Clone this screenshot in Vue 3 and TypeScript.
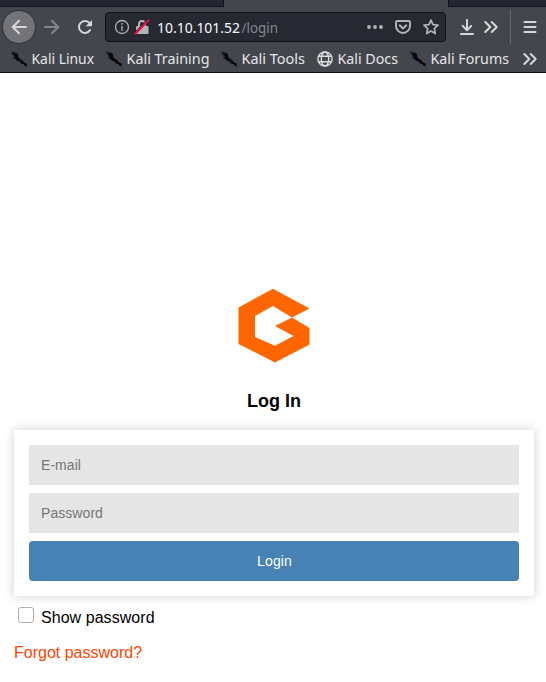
<script setup lang="ts">
import { computed, ref } from 'vue'

interface Bookmark {
  label: string
  icon: 'dragon' | 'globe'
  width: number
  textWidth: number
}

const bookmarks: Bookmark[] = [
  { label: 'Kali Linux', icon: 'dragon', width: 95, textWidth: 62.5 },
  { label: 'Kali Training', icon: 'dragon', width: 115, textWidth: 83 },
  { label: 'Kali Tools', icon: 'dragon', width: 96, textWidth: 63.5 },
  { label: 'Kali Docs', icon: 'globe', width: 93, textWidth: 60.5 },
  { label: 'Kali Forums', icon: 'dragon', width: 112, textWidth: 78.5 },
]

const email = ref('')
const password = ref('')
const showPassword = ref(false)
const passwordType = computed(() => (showPassword.value ? 'text' : 'password'))
</script>

<template>
  <div class="window">
    <header class="browser">
      <div class="tabs"><div class="tab"></div><div class="active-tab"></div><div class="tab rest"></div></div>
      <nav class="toolbar">
        <button class="back" aria-label="Back">
          <svg width="16" height="16" viewBox="0 0 16 16" class="stroke"><path d="M15 8H2M8 1.7 1.7 8 8 14.3" /></svg>
        </button>
        <svg class="forward stroke" width="16" height="16" viewBox="0 0 16 16"><path d="M1 8h13M8 1.7 14.3 8 8 14.3" /></svg>
        <svg class="reload" width="16" height="16" viewBox="0 0 16 16">
          <path class="arc" d="M12.2 3.7A6 6 0 1 0 13.1 11" />
          <path class="solid" d="M15 1v6.3H8.7Z" />
        </svg>
        <div class="address">
          <svg class="info" width="16" height="16" viewBox="0 0 16 16">
            <circle cx="8" cy="8" r="6.5" /><path d="M8 7v4.7M8 4.1v1.6" />
          </svg>
          <svg class="lock" width="16" height="16" viewBox="0 0 16 16">
            <path d="M5 7.5V4.9a3 3 0 0 1 6 0v2.6" class="shackle" />
            <rect x="2" y="7" width="12.5" height="8" rx="1.2" />
            <path d="M.2 14.3 13.4.6" class="gap" />
            <path d="M1.5 14.8 14.5 1.4" class="slash" />
          </svg>
          <div class="url">
            <svg width="84" height="24"><text x="0" y="17.5" textLength="83" lengthAdjust="spacingAndGlyphs" class="host">10.10.101.52</text></svg>
            <svg width="40" height="24"><text x="0.5" y="17.5" textLength="36.5" lengthAdjust="spacingAndGlyphs" class="path">/login</text></svg>
          </div>
          <div class="actions">
            <svg width="16" height="16" viewBox="0 0 16 16" fill="#b2b4b8"><circle cx="2" cy="8" r="1.9" /><circle cx="8" cy="8" r="1.9" /><circle cx="14" cy="8" r="1.9" /></svg>
            <svg class="action-line" width="16" height="16" viewBox="0 0 16 16"><path d="M2.2 2h11.6q1.2 0 1.2 1.2V7a7 7 0 0 1-14 0V3.2Q1 2 2.2 2ZM4.7 6.3 8 9.5l3.3-3.2" /></svg>
            <svg class="action-line star" width="16" height="16" viewBox="0 0 16 16"><path d="m8 1.1 2 4.5 5 .6-3.7 3.4 1 5L8 12.1l-4.3 2.5 1-5L1 6.2l5-.6Z" /></svg>
          </div>
        </div>
        <svg class="download stroke" width="16" height="16" viewBox="0 0 16 16"><path d="M8 1v10M3.7 6.9 8 11.2l4.3-4.3M2 15h12" /></svg>
        <svg class="more stroke" width="16" height="16" viewBox="0 0 16 16"><path d="m2.3 3 5 5-5 5M8.7 3l5 5-5 5" /></svg>
        <i class="divider"></i>
        <svg class="menu stroke" width="14" height="16" viewBox="0 0 14 16"><path d="M1.5 3h11M1.5 8h11M1.5 13h11" /></svg>
      </nav>
      <div class="bookmarks">
        <a v-for="item in bookmarks" :key="item.label" class="bookmark" :style="{ width: item.width + 'px' }">
          <svg v-if="item.icon === 'dragon'" class="dragon" width="16" height="16" viewBox="0 0 16 16">
            <path d="M-.3 0 2.5 1.2 5.2 1.8 7 3.2 7.2 5.7 8.8 7.8 11.3 9 12.4 11 15.8 12.7 15.5 15.7 13.3 14.5 12.5 13 10 12.4 8.6 10.5 6 9.8 4.8 8.3 1.6 7 4 6.6 1.7 4.8 3.5 4.4 0 2.5 2 2.2Z" />
            <path class="highlight" d="m2 1.6 3 1.7M3 5.7l2 .4M9 9l2 1.4" />
          </svg>
          <svg v-else class="globe" width="16" height="16" viewBox="0 0 16 16">
            <circle cx="8" cy="8" r="7.1" /><ellipse cx="8" cy="8" rx="3.7" ry="7" /><path d="M1.8 5.2h12.4M1.8 10.8h12.4" />
          </svg>
          <svg class="label" :width="item.textWidth + 2" height="24">
            <text x="0.5" y="17" :textLength="item.textWidth" lengthAdjust="spacingAndGlyphs">{{ item.label }}</text>
          </svg>
        </a>
        <svg class="stroke" width="16" height="16" viewBox="0 0 16 16"><path d="m2.3 3 5 5-5 5M8.7 3l5 5-5 5" /></svg>
      </div>
    </header>
    <main class="page">
      <svg class="logo" width="72" height="74" viewBox="0 0 72 74">
        <path fill="#ff6600" fill-rule="evenodd" d="M35-.3 71.5 19.5 54 28.5 71.5 39V55.5L37 73.5.5 55V18.5ZM35 17 17 27V48L37 56.7 55.5 47 37 37 54 28.5Z" />
      </svg>
      <h1>Log In</h1>
      <form class="card" @submit.prevent>
        <input v-model="email" type="text" placeholder="E-mail" />
        <input v-model="password" :type="passwordType" placeholder="Password" />
        <button type="submit">Login</button>
      </form>
      <label class="show"><input v-model="showPassword" type="checkbox" /><span>Show password</span></label>
      <a class="forgot">Forgot password?</a>
    </main>
  </div>
</template>

<style>
body { margin: 0; background: #fff; overflow: hidden; }
</style>

<style scoped>
* { box-sizing: border-box; }
.window { width: 546px; height: 682px; background: #fff; font-family: "Liberation Sans", Arial, sans-serif; }
svg { display: block; flex: none; overflow: visible; }
.browser { height: 73px; background: #43464d; border-bottom: 1px solid #0c0c0d; }
.tabs { display: flex; height: 7px; }
.tab { width: 224px; background: #232630; border-bottom: 1px solid #14151a; border-right: 1px solid #14151a; }
.active-tab { width: 224px; }
.rest { width: 98px; border-right: 0; border-left: 1px solid #14151a; }
.toolbar { display: flex; align-items: center; height: 40px; padding-left: 2px; }
.stroke { fill: none; stroke: #d7d7d8; stroke-width: 2; stroke-linecap: round; stroke-linejoin: round; }
.back { display: grid; place-items: center; width: 34px; height: 34px; padding: 0; border: 1px solid #303238; border-radius: 50%; background: #737479; }
.forward { margin-left: 8px; stroke: #85868b; }
.reload { margin-left: 17px; }
.arc { fill: none; stroke: #d7d7d8; stroke-width: 2; stroke-linecap: round; }
.solid { fill: #d7d7d8; }
.address { display: flex; align-items: center; width: 341px; height: 30px; margin-left: 12px; padding: 0 6px 0 8px; background: #262932; border: 1px solid #0f1014; border-radius: 4px; }
.info { fill: none; stroke: #b2b4b8; stroke-width: 1.3; }
.lock { margin-left: 4px; fill: #b2b4b8; }
.shackle { fill: none; stroke: #b2b4b8; stroke-width: 2; }
.gap { stroke: #262932; stroke-width: 1.2; }
.slash { stroke: #f00d43; stroke-width: 2; stroke-linecap: round; }
.url { display: flex; margin-left: 7px; font: 15px "Noto Sans", sans-serif; }
.host { fill: #f9f9fa; }
.path { fill: #85868e; }
.actions { display: flex; gap: 12px; margin-left: auto; }
.action-line { fill: none; stroke: #b2b4b8; stroke-width: 1.9; stroke-linejoin: round; stroke-linecap: round; }
.star { stroke-width: 1.7; }
.download { margin-left: 13px; }
.more { margin-left: 8px; }
.divider { width: 1px; height: 34px; margin-left: 11px; background: #686a70; }
.menu { margin-left: 12px; }
.bookmarks { display: flex; align-items: center; height: 24px; padding-left: 11px; }
.bookmark { display: flex; align-items: center; flex: none; height: 24px; }
.dragon { fill: #050607; }
.highlight { fill: none; stroke: #34363b; stroke-width: .5; }
.globe { fill: none; stroke: #dedede; stroke-width: 1.4; }
.label { margin-left: 4px; fill: #e6e6e7; font: 15px "Noto Sans", sans-serif; }
.page { display: flex; flex-direction: column; padding: 216px 12px 0 14px; }
.logo { margin-left: 224px; }
h1 { height: 22px; margin: 27px 0 18px; text-align: center; font-size: 18px; line-height: 22px; }
.card { display: flex; flex-direction: column; gap: 8px; height: 166px; padding: 15px; background: #fff; box-shadow: 0 0 10px rgba(0, 0, 0, .2); }
.card input, .card button { display: block; width: 100%; height: 40px; padding: 0 12px; border: 0; font: 14px "Liberation Sans", Arial, sans-serif; }
.card input { border-radius: 0; background: #e5e5e5; }
.card input::placeholder { color: #757575; opacity: 1; letter-spacing: .06px; }
.card button { padding-left: 13px; border-radius: 4px; background: #4682b4; color: #fff; letter-spacing: .1px; }
.show { display: flex; align-items: center; height: 20px; margin-top: 12px; font-size: 16px; letter-spacing: .05px; }
.show input { appearance: none; width: 16px; height: 16px; margin: -6px 7px 0 4px; border: 1px solid #b5afab; border-radius: 3px; background: #fff; }
.forgot { margin-top: 16px; color: #ff4500; font-size: 16px; line-height: 18px; }
</style>
